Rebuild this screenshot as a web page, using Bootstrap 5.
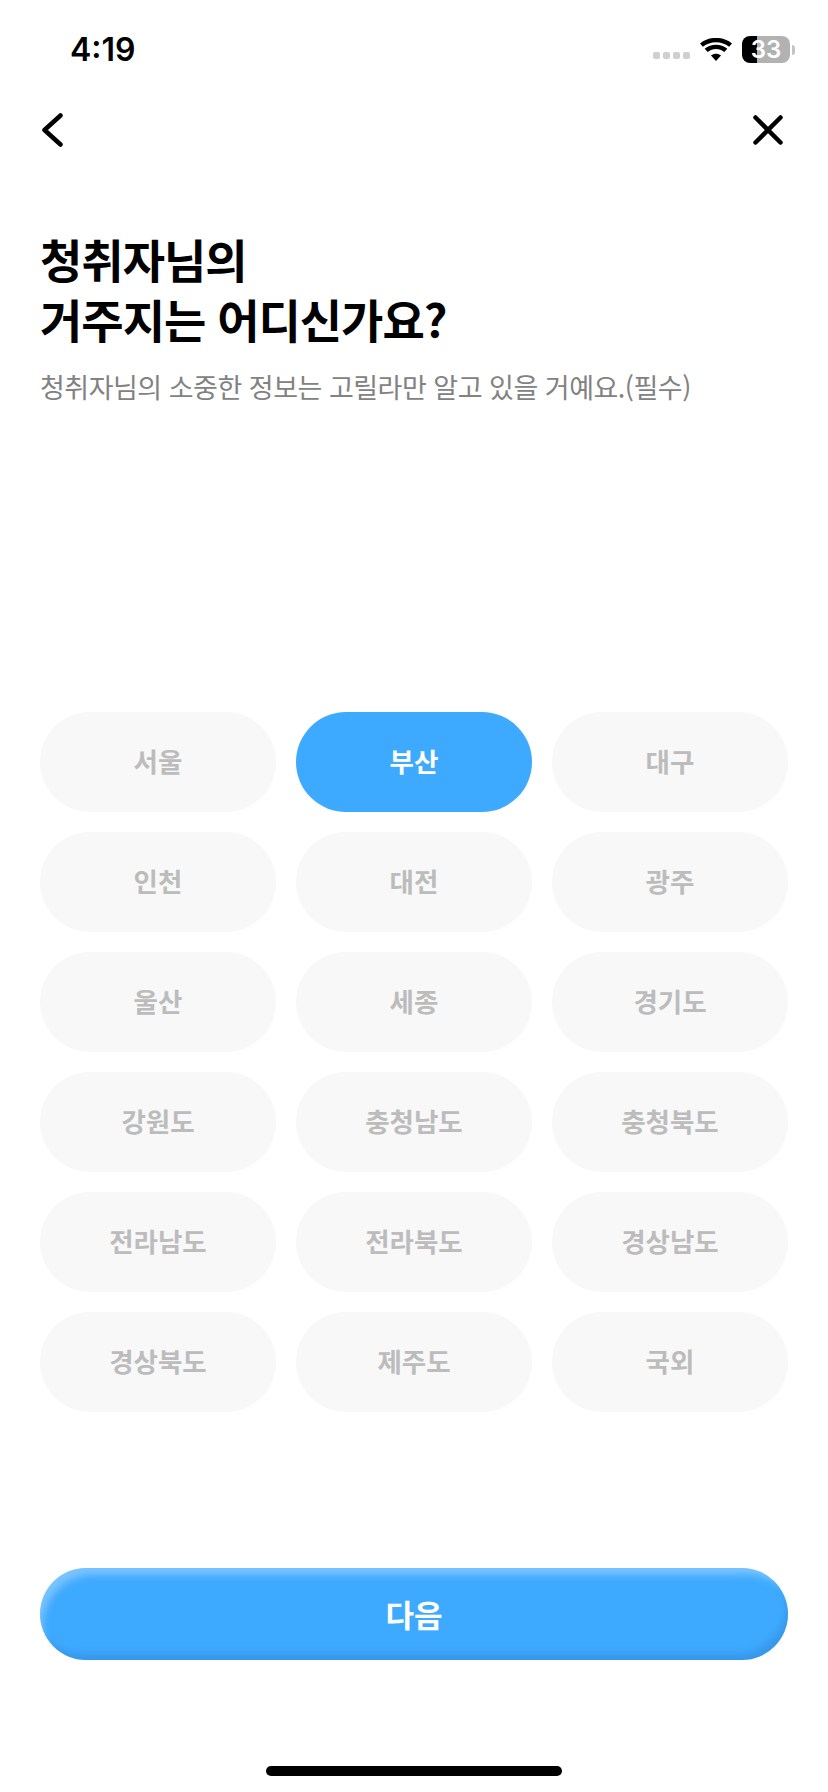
<!DOCTYPE html>
<html lang="ko">
<head>
    <meta charset="UTF-8">
    <meta name="viewport" content="width=device-width, initial-scale=1.0">
    <title>거주지 선택</title>
    <link href="https://cdn.jsdelivr.net/npm/bootstrap@5.3.2/dist/css/bootstrap.min.css" rel="stylesheet">
    <style>
        body { background: #fff; font-family: "Liberation Sans", "Noto Sans CJK KR", sans-serif; }
        .screen { width: 828px; height: 1792px; padding: 0 40px; }
        .status-row { height: 100px; padding-top: 30px; }
        .clock { font-family: "Inter", "Liberation Sans", sans-serif; font-size: 32px; font-weight: 600; line-height: 40px; margin-left: 30px; color: #000; }
        .status-icons { gap: 10px; margin: 6px -7px 0 0; }
        .signal-dots { gap: 3px; margin-top: 11px; }
        .signal-dots i { width: 7px; height: 7px; border-radius: 2px; background: #cfcfcf; display: block; }
        .battery-pill { width: 48px; height: 27px; border-radius: 8px; background: linear-gradient(90deg, #000 0 32%, #b2b2b2 32% 100%); color: #fff; font-family: "Inter", sans-serif; font-size: 24px; font-weight: 600; line-height: 27px; text-align: center; }
        .battery-cap { width: 3px; height: 10px; background: #c4c4c4; border-radius: 0 3px 3px 0; margin-left: 2px; }
        .nav-row { height: 60px; }
        .nav-back { margin-left: 2px; }
        .nav-close { margin-right: 5px; }
        .page-title { font-family: "Noto Sans CJK KR", sans-serif; font-size: 46px; font-weight: 700; line-height: 60px; letter-spacing: -1px; color: #000; margin: 68px 0 0; }
        .page-sub { font-family: "Noto Sans CJK KR", sans-serif; font-size: 27px; line-height: 38px; letter-spacing: -.5px; color: #828282; margin: 20px 0 0; }
        .region-grid { display: grid; grid-template-columns: repeat(3, 236px); row-gap: 20px; justify-content: space-between; margin-top: 306px; }
        .region-btn { height: 100px; border: 0; border-radius: 50px; background: #f8f8f8; color: #bcbcbc; font-family: "Noto Sans CJK KR", sans-serif; font-size: 26.500px; font-weight: 700; padding: 0 0 2px; }
        .region-btn.picked { background: #3eaaff; color: #fff; }
        .next-btn { height: 92px; width: 100%; border: 0; border-radius: 46px; background: #3eaaff; color: #fff; font-family: "Noto Sans CJK KR", sans-serif; font-size: 31px; font-weight: 700; box-shadow: inset 7px 11px 7px -4px rgba(255,255,255,.3), inset -5px -10px 8px -4px rgba(40,110,180,.32); margin-top: 156px; }
        .home-bar { width: 296px; height: 10px; border-radius: 5px; background: #000; margin: 106px auto 0; }
    </style>
</head>
<body>
    <div class="screen">
        <div class="status-row d-flex justify-content-between align-items-start">
            <span class="clock">4:19</span>
            <div class="status-icons d-flex align-items-center">
                <div class="signal-dots d-flex"><i></i><i></i><i></i><i></i></div>
                <svg width="32" height="24" viewBox="0 0 32 24"><path d="M16 23 11 17.500C13.900 15 18.100 15 21 17.500Z M7.700 14 4.700 10.700C11 5.300 21 5.300 27.300 10.700L24.300 14C19.500 10 12.500 10 7.700 14Z M2.900 8.700 0 5.500C9 -2 23 -2 32 5.500L29.100 8.700C21.700 2.600 10.300 2.600 2.900 8.700Z" fill="#000"/></svg>
                <div class="d-flex align-items-center">
                    <div class="battery-pill">33</div>
                    <div class="battery-cap"></div>
                </div>
            </div>
        </div>

        <div class="nav-row d-flex justify-content-between align-items-center">
            <svg class="nav-back" width="21" height="34" viewBox="0 0 21 34"><path d="M18.500 2.500 2.500 17 18.500 31.500" fill="none" stroke="#000" stroke-width="4.500" stroke-linecap="round" stroke-linejoin="round"/></svg>
            <svg class="nav-close" width="30" height="30" viewBox="0 0 30 30"><path d="M2.500 2.500 27.500 27.500M27.500 2.500 2.500 27.500" fill="none" stroke="#000" stroke-width="4.500" stroke-linecap="round"/></svg>
        </div>

        <h1 class="page-title">청취자님의<br>거주지는 어디신가요?</h1>
        <p class="page-sub">청취자님의 소중한 정보는 고릴라만 알고 있을 거예요.(필수)</p>

        <div class="region-grid">
            <button class="region-btn">서울</button>
            <button class="region-btn picked">부산</button>
            <button class="region-btn">대구</button>
            <button class="region-btn">인천</button>
            <button class="region-btn">대전</button>
            <button class="region-btn">광주</button>
            <button class="region-btn">울산</button>
            <button class="region-btn">세종</button>
            <button class="region-btn">경기도</button>
            <button class="region-btn">강원도</button>
            <button class="region-btn">충청남도</button>
            <button class="region-btn">충청북도</button>
            <button class="region-btn">전라남도</button>
            <button class="region-btn">전라북도</button>
            <button class="region-btn">경상남도</button>
            <button class="region-btn">경상북도</button>
            <button class="region-btn">제주도</button>
            <button class="region-btn">국외</button>
        </div>

        <button class="next-btn">다음</button>
        <div class="home-bar"></div>
    </div>
    <script src="https://cdn.jsdelivr.net/npm/bootstrap@5.3.2/dist/js/bootstrap.bundle.min.js"></script>
</body>
</html>
